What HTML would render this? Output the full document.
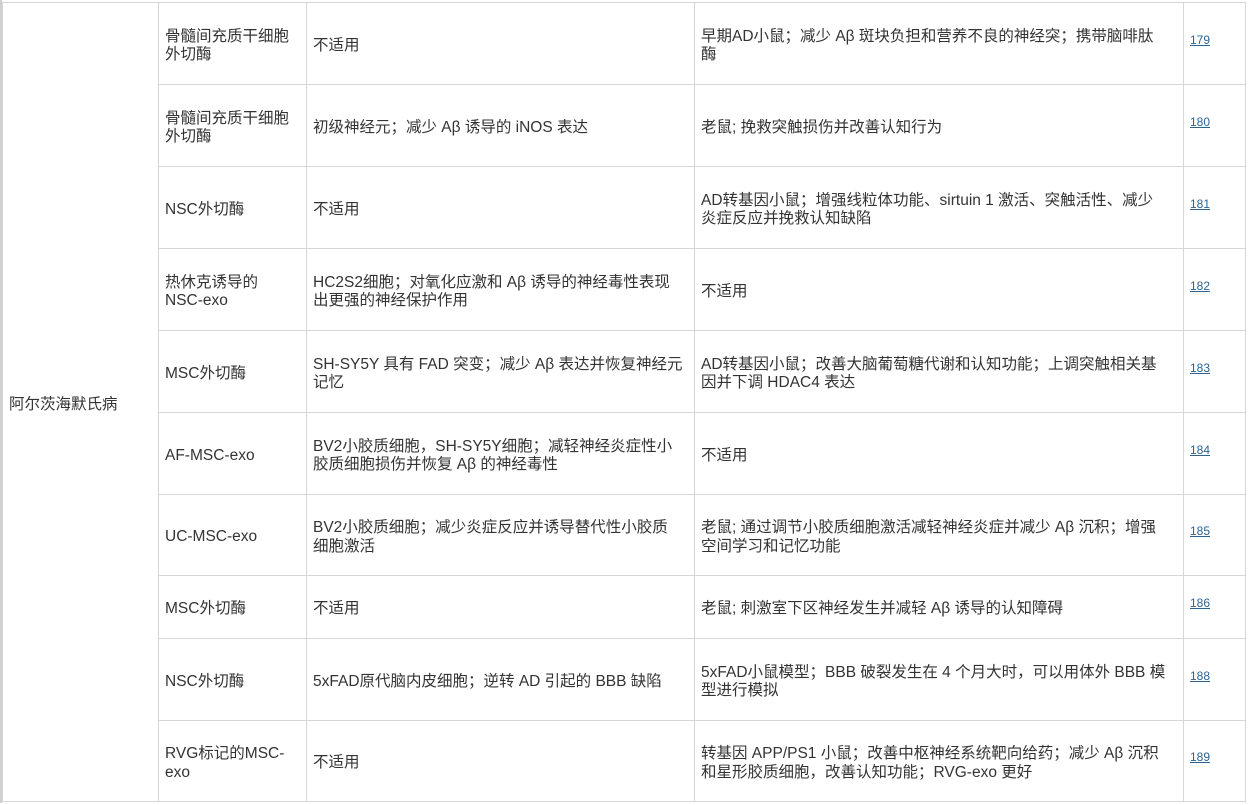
<!DOCTYPE html>
<html><head><meta charset="utf-8"><style>
body{margin:0;width:1249px;height:803px;background:#fff;overflow:hidden;font-family:"Liberation Sans","Noto Sans CJK SC",sans-serif;color:#333;position:relative}
.strip{position:absolute;left:0;top:0;width:2px;height:803px;background:#d0d0d0}
.h{position:absolute;height:1px;background:#d6d6d6}
.v{position:absolute;width:1px;background:#d6d6d6}
.c{position:absolute;display:flex;align-items:center;font-size:15.5px;line-height:18.5px;white-space:nowrap;margin-top:3px}
.l{margin-top:-1px}
.c a{color:#2a6496;font-size:12px;text-decoration:underline}
</style></head><body>
<div class="strip"></div>
<div class="h" style="left:2px;width:1244px;top:2px"></div>
<div class="h" style="left:2px;width:1244px;top:801px"></div>
<div class="v" style="left:2px;top:2px;height:800px"></div>
<div class="v" style="left:158px;top:2px;height:800px"></div>
<div class="v" style="left:306px;top:2px;height:800px"></div>
<div class="v" style="left:694px;top:2px;height:800px"></div>
<div class="v" style="left:1183px;top:2px;height:800px"></div>
<div class="v" style="left:1245px;top:2px;height:800px"></div>
<div class="h" style="left:158px;width:1088px;top:84px"></div>
<div class="h" style="left:158px;width:1088px;top:166px"></div>
<div class="h" style="left:158px;width:1088px;top:248px"></div>
<div class="h" style="left:158px;width:1088px;top:330px"></div>
<div class="h" style="left:158px;width:1088px;top:412px"></div>
<div class="h" style="left:158px;width:1088px;top:494px"></div>
<div class="h" style="left:158px;width:1088px;top:575px"></div>
<div class="h" style="left:158px;width:1088px;top:638px"></div>
<div class="h" style="left:158px;width:1088px;top:720px"></div>

<div class="c" style="left:9px;top:2px;width:145px;height:800px">阿尔茨海默氏病</div>

<div class="c" style="left:165px;top:2px;width:133px;height:82px">骨髓间充质干细胞<br>外切酶</div>
<div class="c" style="left:313px;top:2px;width:373px;height:82px">不适用</div>
<div class="c" style="left:701px;top:2px;width:474px;height:82px">早期AD小鼠；减少 Aβ 斑块负担和营养不良的神经突；携带脑啡肽<br>酶</div>
<div class="c l" style="left:1190px;top:0px;width:54px;height:82px"><a>179</a></div>

<div class="c" style="left:165px;top:84px;width:133px;height:82px">骨髓间充质干细胞<br>外切酶</div>
<div class="c" style="left:313px;top:84px;width:373px;height:82px">初级神经元；减少 Aβ 诱导的 iNOS 表达</div>
<div class="c" style="left:701px;top:84px;width:474px;height:82px">老鼠; 挽救突触损伤并改善认知行为</div>
<div class="c l" style="left:1190px;top:82px;width:54px;height:82px"><a>180</a></div>

<div class="c" style="left:165px;top:166px;width:133px;height:82px">NSC外切酶</div>
<div class="c" style="left:313px;top:166px;width:373px;height:82px">不适用</div>
<div class="c" style="left:701px;top:166px;width:474px;height:82px">AD转基因小鼠；增强线粒体功能、sirtuin 1 激活、突触活性、减少<br>炎症反应并挽救认知缺陷</div>
<div class="c l" style="left:1190px;top:164px;width:54px;height:82px"><a>181</a></div>

<div class="c" style="left:165px;top:248px;width:133px;height:82px">热休克诱导的<br>NSC-exo</div>
<div class="c" style="left:313px;top:248px;width:373px;height:82px">HC2S2细胞；对氧化应激和 Aβ 诱导的神经毒性表现<br>出更强的神经保护作用</div>
<div class="c" style="left:701px;top:248px;width:474px;height:82px">不适用</div>
<div class="c l" style="left:1190px;top:246px;width:54px;height:82px"><a>182</a></div>

<div class="c" style="left:165px;top:330px;width:133px;height:82px">MSC外切酶</div>
<div class="c" style="left:313px;top:330px;width:373px;height:82px">SH-SY5Y 具有 FAD 突变；减少 Aβ 表达并恢复神经元<br>记忆</div>
<div class="c" style="left:701px;top:330px;width:474px;height:82px">AD转基因小鼠；改善大脑葡萄糖代谢和认知功能；上调突触相关基<br>因并下调 HDAC4 表达</div>
<div class="c l" style="left:1190px;top:328px;width:54px;height:82px"><a>183</a></div>

<div class="c" style="left:165px;top:412px;width:133px;height:82px">AF-MSC-exo</div>
<div class="c" style="left:313px;top:412px;width:373px;height:82px">BV2小胶质细胞，SH-SY5Y细胞；减轻神经炎症性小<br>胶质细胞损伤并恢复 Aβ 的神经毒性</div>
<div class="c" style="left:701px;top:412px;width:474px;height:82px">不适用</div>
<div class="c l" style="left:1190px;top:410px;width:54px;height:82px"><a>184</a></div>

<div class="c" style="left:165px;top:494px;width:133px;height:81px">UC-MSC-exo</div>
<div class="c" style="left:313px;top:494px;width:373px;height:81px">BV2小胶质细胞；减少炎症反应并诱导替代性小胶质<br>细胞激活</div>
<div class="c" style="left:701px;top:494px;width:474px;height:81px">老鼠; 通过调节小胶质细胞激活减轻神经炎症并减少 Aβ 沉积；增强<br>空间学习和记忆功能</div>
<div class="c l" style="left:1190px;top:492px;width:54px;height:81px"><a>185</a></div>

<div class="c" style="left:165px;top:575px;width:133px;height:63px">MSC外切酶</div>
<div class="c" style="left:313px;top:575px;width:373px;height:63px">不适用</div>
<div class="c" style="left:701px;top:575px;width:474px;height:63px">老鼠; 刺激室下区神经发生并减轻 Aβ 诱导的认知障碍</div>
<div class="c l" style="left:1190px;top:573px;width:54px;height:63px"><a>186</a></div>

<div class="c" style="left:165px;top:638px;width:133px;height:82px">NSC外切酶</div>
<div class="c" style="left:313px;top:638px;width:373px;height:82px">5xFAD原代脑内皮细胞；逆转 AD 引起的 BBB 缺陷</div>
<div class="c" style="left:701px;top:638px;width:474px;height:82px">5xFAD小鼠模型；BBB 破裂发生在 4 个月大时，可以用体外 BBB 模<br>型进行模拟</div>
<div class="c l" style="left:1190px;top:636px;width:54px;height:82px"><a>188</a></div>

<div class="c" style="left:165px;top:720px;width:133px;height:81px">RVG标记的MSC-<br>exo</div>
<div class="c" style="left:313px;top:720px;width:373px;height:81px">不适用</div>
<div class="c" style="left:701px;top:720px;width:474px;height:81px">转基因 APP/PS1 小鼠；改善中枢神经系统靶向给药；减少 Aβ 沉积<br>和星形胶质细胞，改善认知功能；RVG-exo 更好</div>
<div class="c l" style="left:1190px;top:718px;width:54px;height:81px"><a>189</a></div>
</body></html>
